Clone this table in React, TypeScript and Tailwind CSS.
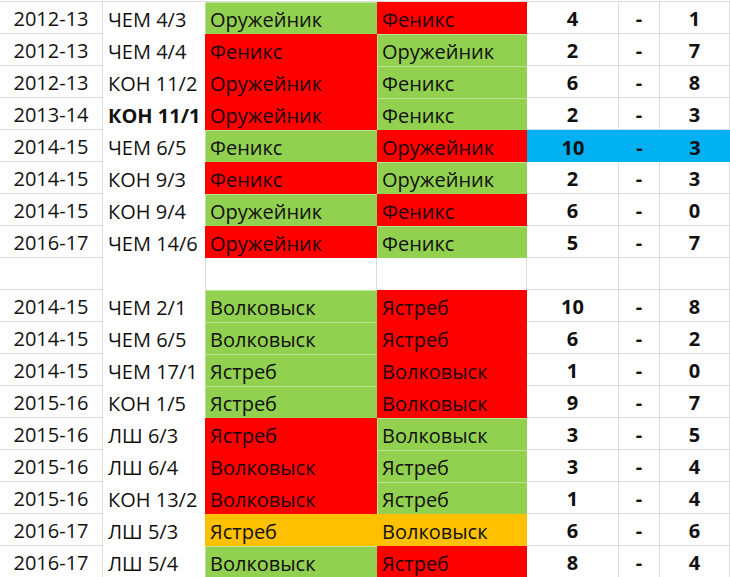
type Fill = 'g' | 'r' | 'o';

interface Match {
  season: string;
  round: string;
  home: string;
  away: string;
  hf: Fill;
  af: Fill;
  a: string;
  b: string;
  bold?: boolean;
  hl?: boolean;
}

const fills: Record<Fill, string> = {
  g: 'bg-[#92d050] shadow-[inset_1px_1px_0_#bfe398]',
  r: 'bg-[#ff0000] text-[#1c0000]',
  o: 'bg-[#ffc000]',
};

const top: Match[] = [
  { season: '2012-13', round: 'ЧЕМ 4/3', home: 'Оружейник', away: 'Феникс', hf: 'g', af: 'r', a: '4', b: '1' },
  { season: '2012-13', round: 'ЧЕМ 4/4', home: 'Феникс', away: 'Оружейник', hf: 'r', af: 'g', a: '2', b: '7' },
  { season: '2012-13', round: 'КОН 11/2', home: 'Оружейник', away: 'Феникс', hf: 'r', af: 'g', a: '6', b: '8' },
  { season: '2013-14', round: 'КОН 11/1', home: 'Оружейник', away: 'Феникс', hf: 'r', af: 'g', a: '2', b: '3', bold: true },
  { season: '2014-15', round: 'ЧЕМ 6/5', home: 'Феникс', away: 'Оружейник', hf: 'g', af: 'r', a: '10', b: '3', hl: true },
  { season: '2014-15', round: 'КОН 9/3', home: 'Феникс', away: 'Оружейник', hf: 'r', af: 'g', a: '2', b: '3' },
  { season: '2014-15', round: 'КОН 9/4', home: 'Оружейник', away: 'Феникс', hf: 'g', af: 'r', a: '6', b: '0' },
  { season: '2016-17', round: 'ЧЕМ 14/6', home: 'Оружейник', away: 'Феникс', hf: 'r', af: 'g', a: '5', b: '7' },
];

const bottom: Match[] = [
  { season: '2014-15', round: 'ЧЕМ 2/1', home: 'Волковыск', away: 'Ястреб', hf: 'g', af: 'r', a: '10', b: '8' },
  { season: '2014-15', round: 'ЧЕМ 6/5', home: 'Волковыск', away: 'Ястреб', hf: 'g', af: 'r', a: '6', b: '2' },
  { season: '2014-15', round: 'ЧЕМ 17/1', home: 'Ястреб', away: 'Волковыск', hf: 'g', af: 'r', a: '1', b: '0' },
  { season: '2015-16', round: 'КОН 1/5', home: 'Ястреб', away: 'Волковыск', hf: 'g', af: 'r', a: '9', b: '7' },
  { season: '2015-16', round: 'ЛШ 6/3', home: 'Ястреб', away: 'Волковыск', hf: 'r', af: 'g', a: '3', b: '5' },
  { season: '2015-16', round: 'ЛШ 6/4', home: 'Волковыск', away: 'Ястреб', hf: 'r', af: 'g', a: '3', b: '4' },
  { season: '2015-16', round: 'КОН 13/2', home: 'Волковыск', away: 'Ястреб', hf: 'r', af: 'g', a: '1', b: '4' },
  { season: '2016-17', round: 'ЛШ 5/3', home: 'Ястреб', away: 'Волковыск', hf: 'o', af: 'o', a: '6', b: '6' },
  { season: '2016-17', round: 'ЛШ 5/4', home: 'Волковыск', away: 'Ястреб', hf: 'g', af: 'r', a: '8', b: '4' },
];

const row = 'grid h-8 grid-cols-[103px_102px_172px_150px_92px_41px_70px]';
const line = 'border-[#d9dce1]';
const cell = 'flex items-center pt-[3px]';

function Row({ m }: { m: Match }) {
  const score = m.hl ? 'bg-[#00b0f0]' : `border-r border-b ${line}`;
  return (
    <div className={row}>
      <div className={`${cell} justify-center border-r border-b ${line}`}>{m.season}</div>
      <div className={`${cell} pl-[5px] whitespace-nowrap ${m.bold ? 'font-bold' : ''}`}>{m.round}</div>
      <div className={`${cell} pl-[5px] ${fills[m.hf]}`}>{m.home}</div>
      <div className={`${cell} pl-[5px] ${fills[m.af]}`}>{m.away}</div>
      <div className={`${cell} justify-center font-bold ${score}`}>{m.a}</div>
      <div className={`${cell} justify-center font-bold ${score}`}>-</div>
      <div className={`${cell} justify-center font-bold ${score}`}>{m.b}</div>
    </div>
  );
}

export default function App() {
  return (
    <div
      className="h-[577px] w-[730px] overflow-hidden bg-white text-[20px] leading-none text-[#111]"
      style={{ fontFamily: '"Open Sans", "Noto Sans", sans-serif' }}
    >
      <div className={`mt-px border-t ${line}`}>
        {top.map((m, i) => (
          <Row key={'t' + i} m={m} />
        ))}

        {/* empty separator row */}
        <div className={row}>
          <div className={`border-r border-b ${line}`} />
          <div />
          <div className={`border-l border-r ${line}`} />
          <div className={`border-r ${line}`} />
          <div className={`border-r border-b ${line}`} />
          <div className={`border-r border-b ${line}`} />
          <div className={`border-r border-b ${line}`} />
        </div>

        {bottom.map((m, i) => (
          <Row key={'b' + i} m={m} />
        ))}
      </div>
    </div>
  );
}
